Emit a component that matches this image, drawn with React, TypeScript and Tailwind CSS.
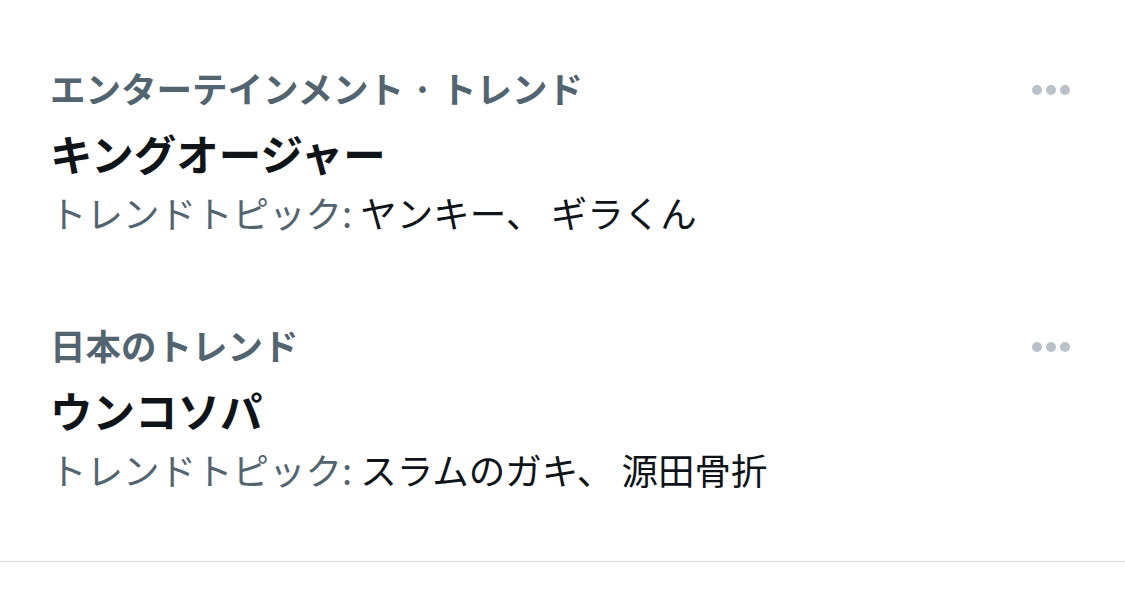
import React from "react";

const font = { fontFamily: '"Noto Sans CJK JP", "Noto Sans", sans-serif' };

function Dots() {
  return (
    <div className="flex items-center gap-[4px] pt-[21px]">
      <span className="block w-[10px] h-[10px] rounded-full bg-[#b8c2cb]" />
      <span className="block w-[10px] h-[10px] rounded-full bg-[#b8c2cb]" />
      <span className="block w-[10px] h-[10px] rounded-full bg-[#b8c2cb]" />
    </div>
  );
}

function Trend({ category, title, topics }: { category: string; title: string; topics: string }) {
  return (
    <div className="flex justify-between items-start">
      <div className="flex flex-col">
        <div className="text-[35.5px] leading-[48px] font-bold text-[#536471]">{category}</div>
        <div className="mt-[13px] text-[42.5px] leading-[56px] font-bold text-[#0f1419]">{title}</div>
        <div className="mt-[4px] text-[36.5px] leading-[56px] text-[#0f1419]">
          <span className="text-[#536471]">トレンドトピック:</span> {topics}
        </div>
      </div>
      <Dots />
    </div>
  );
}

export default function App() {
  return (
    <div className="w-[1125px] h-[590px] bg-white" style={font}>
      <div className="flex flex-col gap-[80px] pt-[64px] pb-[63px] pl-[50px] pr-[55px] border-b border-[#d9d9d9]">
        <Trend category="エンターテインメント · トレンド" title="キングオージャー" topics="ヤンキー、 ギラくん" />
        <Trend category="日本のトレンド" title="ウンコソパ" topics="スラムのガキ、 源田骨折" />
      </div>
    </div>
  );
}
